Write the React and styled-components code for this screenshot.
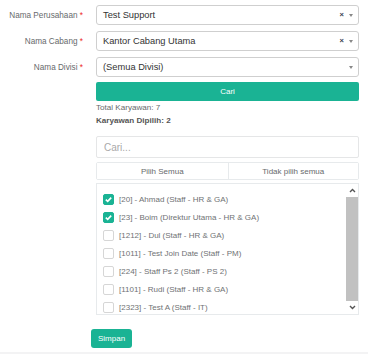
import React, { useState } from 'react';
import styled, { createGlobalStyle } from 'styled-components';

const GlobalStyle = createGlobalStyle`
  html, body {
    margin: 0;
    padding: 0;
    background: #f3f3f4;
  }
  body {
    font-family: "Liberation Sans", Arial, sans-serif;
  }
`;

const employees = [
	{ id: 20, name: 'Ahmad', pos: 'Staff - HR & GA', checked: true },
	{ id: 23, name: 'Boim', pos: 'Direktur Utama - HR & GA', checked: true },
	{ id: 1212, name: 'Dul', pos: 'Staff - HR & GA', checked: false },
	{ id: 1011, name: 'Test Join Date', pos: 'Staff - PM', checked: false },
	{ id: 224, name: 'Staff Ps 2', pos: 'Staff - PS 2', checked: false },
	{ id: 1101, name: 'Rudi', pos: 'Staff - HR & GA', checked: false },
	{ id: 2323, name: 'Test A', pos: 'Staff - IT', checked: false },
];

const fields = [
	{ label: 'Nama Perusahaan', value: 'Test Support', clearable: true },
	{ label: 'Nama Cabang', value: 'Kantor Cabang Utama', clearable: true },
	{ label: 'Nama Divisi', value: '(Semua Divisi)', clearable: false },
];

const Chevron = ({ up }) => (
	<svg width="7" height="5" viewBox="0 0 7 5">
		<polyline
			points={up ? '1,4 3.5,1.5 6,4' : '1,1 3.5,3.5 6,1'}
			fill="none"
			stroke="#555"
			strokeWidth="1.4"
		/>
	</svg>
);

const Check = () => (
	<svg width="9" height="9" viewBox="0 0 9 9">
		<polyline points="1.8,4.6 3.7,6.4 7.2,2.6" fill="none" stroke="#fff" strokeWidth="1.6" />
	</svg>
);

const App = () => {
	const [list, setList] = useState(employees);
	const selected = list.filter(e => e.checked).length;

	const toggle = id => setList(l => l.map(e => (e.id === id ? { ...e, checked: !e.checked } : e)));

	return (
		<>
			<GlobalStyle />
			<Page>
				<FormGrid>
					{fields.map(f => (
						<React.Fragment key={f.label}>
							<Label>
								{f.label} <Star>*</Star>
							</Label>
							<Select>
								<SelectValue>{f.value}</SelectValue>
								{f.clearable && <Clear>×</Clear>}
								<Caret />
							</Select>
						</React.Fragment>
					))}
				</FormGrid>
				<Body>
					<PrimaryButton>Cari</PrimaryButton>
					<Info>Total Karyawan: {list.length}</Info>
					<Info bold>Karyawan Dipilih: {selected}</Info>
					<SearchInput placeholder="Cari..." />
					<ButtonGroup>
						<GroupButton onClick={() => setList(l => l.map(e => ({ ...e, checked: true })))}>
							Pilih Semua
						</GroupButton>
						<GroupButton onClick={() => setList(l => l.map(e => ({ ...e, checked: false })))}>
							Tidak pilih semua
						</GroupButton>
					</ButtonGroup>
					<ListBox>
						<Items>
							{list.map(e => (
								<Item key={e.id} onClick={() => toggle(e.id)}>
									<Box checked={e.checked}>{e.checked && <Check />}</Box>
									[{e.id}] - {e.name} ({e.pos})
								</Item>
							))}
						</Items>
						<Scrollbar>
							<ScrollArrow>
								<Chevron up />
							</ScrollArrow>
							<Thumb />
							<ScrollArrow>
								<Chevron />
							</ScrollArrow>
						</Scrollbar>
					</ListBox>
				</Body>
				<SaveButton>Simpan</SaveButton>
			</Page>
		</>
	);
};

const Page = styled.div`
	background: #fff;
	height: 352px;
	box-sizing: border-box;
	padding-top: 5px;
`;

const FormGrid = styled.div`
	display: grid;
	grid-template-columns: 83px 263px;
	column-gap: 13px;
	row-gap: 6px;
	align-items: center;
`;

const Label = styled.div`
	text-align: right;
	font-size: 8.2px;
	color: #676a6c;
	white-space: nowrap;
`;

const Star = styled.span`
	color: #ed2b2b;
`;

const Select = styled.div`
	height: 20px;
	box-sizing: border-box;
	border: 1px solid #cfcfcf;
	border-radius: 3px;
	display: flex;
	align-items: center;
	padding: 0 5px 0 6px;
	background: #fff;
`;

const SelectValue = styled.span`
	flex: 1;
	font-size: 9.3px;
	color: #333;
`;

const Clear = styled.span`
	font-size: 7.5px;
	font-weight: bold;
	color: #3a3f51;
	margin-right: 5px;
	line-height: 1;
`;

const Caret = styled.span`
	width: 0;
	height: 0;
	border-left: 2.5px solid transparent;
	border-right: 2.5px solid transparent;
	border-top: 3px solid #888;
`;

const Body = styled.div`
	margin-left: 96px;
	width: 263px;
	display: flex;
	flex-direction: column;
`;

const PrimaryButton = styled.button`
	margin-top: 5px;
	height: 19px;
	border: none;
	border-radius: 2px;
	background: #1ab394;
	color: #fff;
	font-family: inherit;
	font-size: 8px;
	cursor: pointer;
`;

const Info = styled.div`
	font-size: 8.1px;
	line-height: 13px;
	color: ${props => (props.bold ? '#555' : '#676a6c')};
	font-weight: ${props => (props.bold ? 'bold' : 'normal')};
`;

const SearchInput = styled.input`
	margin-top: 9px;
	height: 22px;
	box-sizing: border-box;
	border: 1px solid #e5e6e7;
	border-radius: 2px;
	padding: 0 7px;
	font-family: inherit;
	font-size: 10px;
	outline: none;
	&::placeholder {
		color: #a9a9a9;
	}
`;

const ButtonGroup = styled.div`
	margin-top: 4px;
	display: grid;
	grid-template-columns: 1fr 1fr;
	height: 18px;
	border: 1px solid #e7eaec;
	box-sizing: border-box;
	border-radius: 2px;
`;

const GroupButton = styled.button`
	border: none;
	background: #fff;
	font-family: inherit;
	font-size: 8px;
	color: #676a6c;
	padding: 0;
	cursor: pointer;
	& + & {
		border-left: 1px solid #e7eaec;
	}
`;

const ListBox = styled.div`
	margin-top: 3px;
	height: 132px;
	box-sizing: border-box;
	border: 1px solid #e7eaec;
	display: flex;
	overflow: hidden;
`;

const Items = styled.div`
	flex: 1;
	padding: 6px 0 0 6px;
	overflow: hidden;
`;

const Item = styled.label`
	height: 18px;
	display: flex;
	align-items: center;
	gap: 5px;
	font-size: 8px;
	color: #6f7274;
	white-space: nowrap;
	cursor: pointer;
`;

const Box = styled.span`
	width: 11px;
	height: 11px;
	box-sizing: border-box;
	border-radius: 2px;
	border: 1px solid ${props => (props.checked ? '#1ab394' : '#d6d6d6')};
	background: ${props => (props.checked ? '#1ab394' : '#fff')};
	display: flex;
	align-items: center;
	justify-content: center;
`;

const Scrollbar = styled.div`
	width: 12px;
	display: flex;
	flex-direction: column;
	background: #f1f1f1;
`;

const ScrollArrow = styled.div`
	height: 13px;
	display: flex;
	align-items: center;
	justify-content: center;
	background: #fff;
`;

const Thumb = styled.div`
	flex: 1;
	background: #c1c1c1;
`;

const SaveButton = styled.button`
	margin: 14px 0 0 91px;
	height: 19px;
	padding: 0 7px;
	border: none;
	border-radius: 3px;
	background: #1ab394;
	color: #fff;
	font-family: inherit;
	font-size: 8px;
	cursor: pointer;
`;

export default App;
